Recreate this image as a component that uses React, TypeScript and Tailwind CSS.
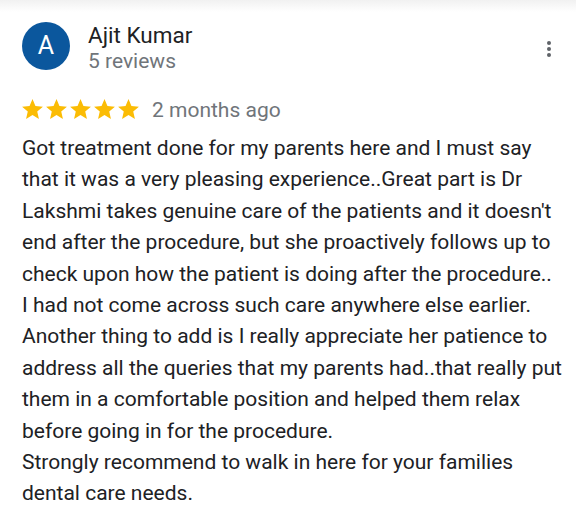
import React from 'react';

const lines = [
  'Got treatment done for my parents here and I must say',
  'that it was a very pleasing experience..Great part is Dr',
  "Lakshmi takes genuine care of the patients and it doesn't",
  'end after the procedure, but she proactively follows up to',
  'check upon how the patient is doing after the procedure..',
  'I had not come across such care anywhere else earlier.',
  'Another thing to add is I really appreciate her patience to',
  'address all the queries that my parents had..that really put',
  'them in a comfortable position and helped them relax',
  'before going in for the procedure.',
  'Strongly recommend to walk in here for your families',
  'dental care needs.',
];

function Star() {
  return (
    <svg width="25" height="25" viewBox="0 0 24 24" className="-mr-[1px]">
      <path
        d="M12 17.27L18.18 21l-1.64-7.03L22 9.24l-7.19-.61L12 2 9.19 8.63 2 9.24l5.46 4.73L5.82 21z"
        fill="#fbbc04"
      />
    </svg>
  );
}

export default function App() {
  return (
    <div className="w-[576px] h-[519px] overflow-hidden bg-gradient-to-b from-[#f1f1f1] via-white to-white [background-size:100%_24px] bg-no-repeat bg-white font-['Roboto',sans-serif]">
      <div className="flex items-start pl-[22px] pr-[20px] pt-[22px]">
        <div className="w-12 h-12 rounded-full bg-[#0b579d] flex items-center justify-center text-white text-[25px]">
          A
        </div>
        <div className="ml-[18px] flex-1 -mt-[1px]">
          <div className="text-[22.5px] leading-[28px] text-[#202124]">Ajit Kumar</div>
          <div className="text-[21px] leading-[24px] text-[#70757a]">5 reviews</div>
        </div>
        <div className="mt-[19px] mr-[5px] flex flex-col gap-[2px]">
          <span className="w-1 h-1 rounded-full bg-[#5f6368]" />
          <span className="w-1 h-1 rounded-full bg-[#5f6368]" />
          <span className="w-1 h-1 rounded-full bg-[#5f6368]" />
        </div>
      </div>
      <div className="flex items-center pl-[20px] mt-[24px]">
        <div className="flex">
          <Star />
          <Star />
          <Star />
          <Star />
          <Star />
        </div>
        <span className="ml-[12px] text-[21px] text-[#70757a] leading-6">2 months ago</span>
      </div>
      <div className="pl-[22px] mt-[11px] text-[21px] leading-[31.4px] text-[#202124]">
        {lines.map((l, i) => (
          <div key={i} className="whitespace-nowrap">{l}</div>
        ))}
      </div>
    </div>
  );
}
